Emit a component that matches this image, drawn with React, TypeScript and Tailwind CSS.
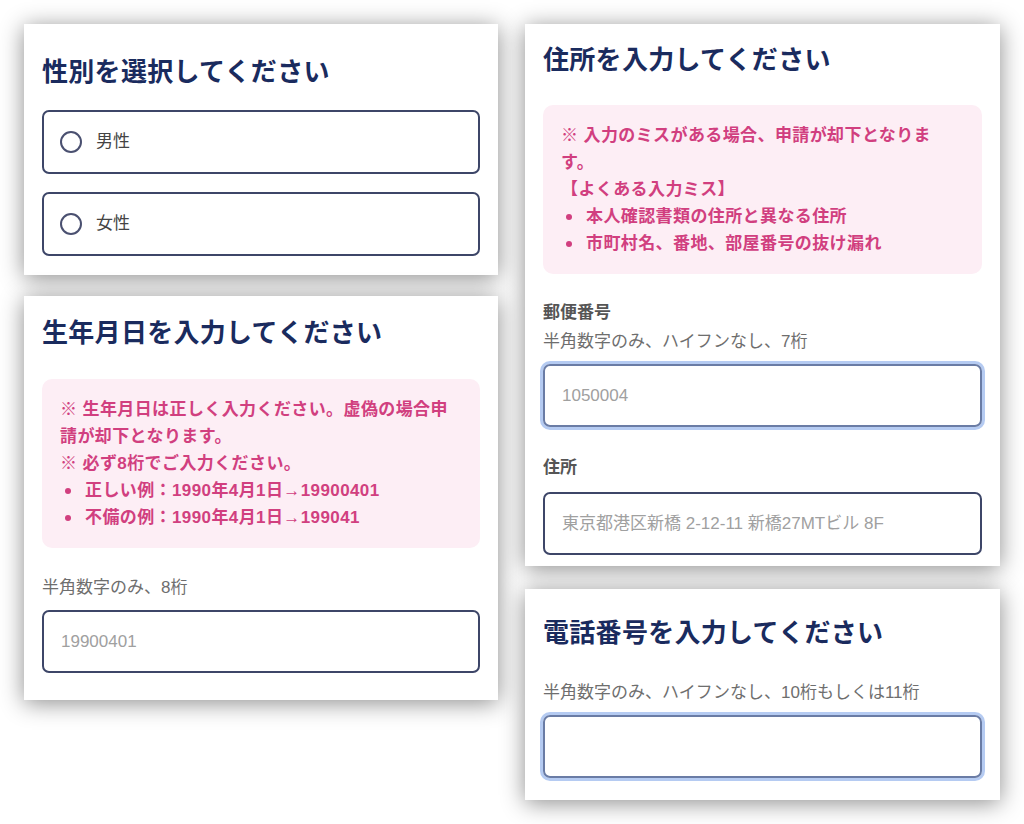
const font = "font-[family-name:'Liberation_Sans','Noto_Sans_CJK_JP',sans-serif]";

function Card({ className, children }: { className: string; children: React.ReactNode }) {
  return (
    <section className={`bg-white px-[18px] shadow-[0_3px_22px_rgba(0,0,0,0.45)] ${className}`}>
      {children}
    </section>
  );
}

function Title({ children }: { children: React.ReactNode }) {
  return <h2 className="text-[26px] font-bold leading-[34px] tracking-[0.3px] text-[#1a2b5e]">{children}</h2>;
}

function Radio({ label }: { label: string }) {
  return (
    <label className="flex h-[64px] items-center gap-[14px] rounded-[7px] border-2 border-[#3d4668] px-[16px]">
      <span className="h-[22px] w-[22px] rounded-full border-2 border-[#4a5070]" />
      <span className="text-[17px] text-[#444]">{label}</span>
    </label>
  );
}

function Notice({ children }: { children: React.ReactNode }) {
  return (
    <div className="rounded-[10px] bg-[#fdeef5] px-[18px] py-[17px] text-[17px] font-bold leading-[27px] tracking-[0.4px] text-[#d13f7f]">
      {children}
    </div>
  );
}

function Bullet({ children }: { children: React.ReactNode }) {
  return (
    <li className="flex items-center">
      <span className="ml-[5px] mr-[14px] h-[6px] w-[6px] rounded-full bg-[#d13f7f]" />
      <span>{children}</span>
    </li>
  );
}

function Field({ placeholder, focused }: { placeholder?: string; focused?: boolean }) {
  return (
    <input
      readOnly
      placeholder={placeholder}
      className={
        focused
          ? 'block h-[63px] w-full rounded-[7px] border-2 border-[#6a7ca5] px-[17px] text-[17px] ring-[3px] ring-[#b5cbf2] outline-none placeholder:text-[#a0a0a0]'
          : 'block h-[63px] w-full rounded-[7px] border-2 border-[#3d4668] px-[17px] text-[17px] outline-none placeholder:text-[#a0a0a0]'
      }
    />
  );
}

export default function App() {
  return (
    <div className={`flex min-h-[824px] w-[1024px] gap-[27px] bg-white pl-[24px] pt-[24px] ${font}`}>
      <div className="flex w-[474px] flex-col gap-[21px]">
        <Card className="pb-[19px] pt-[31px]">
          <Title>性別を選択してください</Title>
          <div className="mt-[21px] flex flex-col gap-[18px]">
            <Radio label="男性" />
            <Radio label="女性" />
          </div>
        </Card>

        <Card className="pb-[27px] pt-[20px]">
          <Title>生年月日を入力してください</Title>
          <div className="mt-[29px]">
            <Notice>
              <p>
                ※ 生年月日は正しく入力ください。虚偽の場合申
                <br />
                請が却下となります。
              </p>
              <p>※ 必ず8桁でご入力ください。</p>
              <ul>
                <Bullet>正しい例：1990年4月1日→19900401</Bullet>
                <Bullet>不備の例：1990年4月1日→199041</Bullet>
              </ul>
            </Notice>
          </div>
          <p className="mt-[27px] text-[17px] leading-[26px] text-[#6e6e6e]">半角数字のみ、8桁</p>
          <div className="mt-[9px]">
            <Field placeholder="19900401" />
          </div>
        </Card>
      </div>

      <div className="flex w-[475px] flex-col gap-[23px]">
        <Card className="pb-[11px] pt-[19px]">
          <Title>住所を入力してください</Title>
          <div className="mt-[28px]">
            <Notice>
              <p>
                ※ 入力のミスがある場合、申請が却下となりま
                <br />
                す。
              </p>
              <p>【よくある入力ミス】</p>
              <ul>
                <Bullet>本人確認書類の住所と異なる住所</Bullet>
                <Bullet>市町村名、番地、部屋番号の抜け漏れ</Bullet>
              </ul>
            </Notice>
          </div>
          <p className="mt-[26px] text-[17px] font-bold leading-[26px] text-[#555]">郵便番号</p>
          <p className="mt-[3px] text-[17px] leading-[26px] text-[#6e6e6e]">半角数字のみ、ハイフンなし、7桁</p>
          <div className="mt-[9px]">
            <Field placeholder="1050004" focused />
          </div>
          <p className="mt-[28px] text-[17px] font-bold leading-[26px] text-[#555]">住所</p>
          <div className="mt-[11px]">
            <Field placeholder="東京都港区新橋 2-12-11 新橋27MTビル 8F" />
          </div>
        </Card>

        <Card className="pb-[22px] pt-[27px]">
          <Title>電話番号を入力してください</Title>
          <p className="mt-[30px] text-[17px] leading-[26px] text-[#6e6e6e]">
            半角数字のみ、ハイフンなし、10桁もしくは11桁
          </p>
          <div className="mt-[9px]">
            <Field focused />
          </div>
        </Card>
      </div>
    </div>
  );
}
